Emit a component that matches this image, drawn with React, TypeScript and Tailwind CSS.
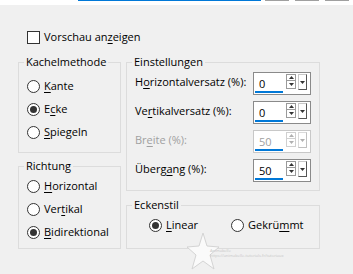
import React from "react";

const font = { fontFamily: '"Open Sans", "Noto Sans", sans-serif' };

function Label({
  text,
  hot,
  disabled,
}: {
  text: string;
  hot: number;
  disabled?: boolean;
}) {
  return (
    <span className={`whitespace-nowrap ${disabled ? "text-[#a0a0a0]" : "text-black"}`}>
      {text.slice(0, hot)}
      <span className="underline underline-offset-2">{text[hot]}</span>
      {text.slice(hot + 1)}
    </span>
  );
}

function Radio({ checked }: { checked?: boolean }) {
  return (
    <span className="w-[13px] h-[13px] shrink-0 rounded-full border border-[#333] bg-white flex items-center justify-center">
      {checked && <span className="w-[7px] h-[7px] rounded-full bg-[#333]" />}
    </span>
  );
}

function RadioRow({
  text,
  hot,
  checked,
}: {
  text: string;
  hot: number;
  checked?: boolean;
}) {
  return (
    <div className="flex items-center gap-[4px] h-[16px]">
      <Radio checked={checked} />
      <Label text={text} hot={hot} />
    </div>
  );
}

function Tri({ up, color }: { up?: boolean; color: string }) {
  return (
    <svg width="5" height="3" viewBox="0 0 5 3">
      <polygon points={up ? "0,3 5,3 2.5,0" : "0,0 5,0 2.5,3"} fill={color} />
    </svg>
  );
}

function SpinBox({ value, disabled }: { value: string; disabled?: boolean }) {
  const c = disabled ? "#b0b0b0" : "#333";
  return (
    <div
      className={`w-[58px] h-[23px] border bg-white flex items-start ${
        disabled ? "border-[#c8c8c8]" : "border-[#8a8a8a]"
      }`}
    >
      <div
        className={`ml-[1px] mt-[1px] w-[28px] h-[19px] border-b-2 border-[#0078d7] pl-[4px] leading-[19px] ${
          disabled ? "text-[#a0a0a0]" : "text-black"
        }`}
      >
        {value}
      </div>
      <div className="ml-[3px] mt-[1px] w-[10px] h-[15px] flex flex-col">
        <div
          className={`h-[7px] border flex items-center justify-center ${
            disabled ? "border-[#d0d0d0]" : "border-[#9a9a9a]"
          }`}
        >
          <Tri up color={c} />
        </div>
        <div
          className={`h-[8px] border border-t-0 flex items-center justify-center ${
            disabled ? "border-[#d0d0d0]" : "border-[#9a9a9a]"
          }`}
        >
          <Tri color={c} />
        </div>
      </div>
      <div
        className={`ml-[2px] mt-[1px] w-[9px] h-[16px] border flex items-center justify-center ${
          disabled
            ? "border-[#dadada] border-r-[#c0c0c0] border-b-[#c0c0c0]"
            : "border-[#c8c8c8] border-r-[#555] border-b-[#555]"
        }`}
      >
        <Tri color={c} />
      </div>
    </div>
  );
}

function SettingRow({
  text,
  hot,
  value,
  disabled,
}: {
  text: string;
  hot: number;
  value: string;
  disabled?: boolean;
}) {
  return (
    <div className="flex items-center justify-between h-[23px]">
      <span className="-mt-[3px]">
        <Label text={text} hot={hot} disabled={disabled} />
      </span>
      <SpinBox value={value} disabled={disabled} />
    </div>
  );
}

function Group({
  title,
  className,
  children,
}: {
  title: string;
  className: string;
  children: React.ReactNode;
}) {
  return (
    <fieldset className={`border border-[#dcdcdc] pl-[5px] ${className}`}>
      <legend className="px-[2px] leading-[16px]">{title}</legend>
      {children}
    </fieldset>
  );
}

export default function App() {
  return (
    <div
      className="w-[353px] h-[274px] bg-[#f0f0f0] text-[11px] text-black relative overflow-hidden"
      style={font}
    >
      <div className="h-[5px] bg-white flex items-start">
        <div className="ml-[78px] w-[183px] h-[1px] bg-[#0078d7]" />
        <div className="ml-[4px] w-[24px] h-[1px] bg-[#a0a0a0]" />
        <div className="ml-[6px] w-[24px] h-[1px] bg-[#a0a0a0]" />
        <div className="ml-[6px] w-[24px] h-[1px] bg-[#a0a0a0]" />
      </div>

      <div className="mt-[24px] ml-[27px] h-[16px] flex items-center gap-[4px]">
        <span className="w-[13px] h-[13px] border border-[#333] bg-white" />
        <Label text="Vorschau anzeigen" hot={11} />
      </div>

      <div className="mt-[9px] ml-[18px] grid grid-cols-[103px_194px] gap-x-[5px]">
        <div className="flex flex-col gap-[5px]">
          <Group title="Kachelmethode" className="h-[99px]">
            <div className="pl-[3px] pt-[8px] flex flex-col gap-[7px]">
              <RadioRow text="Kante" hot={0} />
              <RadioRow text="Ecke" hot={1} checked />
              <RadioRow text="Spiegeln" hot={0} />
            </div>
          </Group>
          <Group title="Richtung" className="h-[91px]">
            <div className="pl-[3px] pt-[4px] flex flex-col gap-[7px]">
              <RadioRow text="Horizontal" hot={0} />
              <RadioRow text="Vertikal" hot={3} />
              <RadioRow text="Bidirektional" hot={0} checked />
            </div>
          </Group>
        </div>

        <div className="flex flex-col gap-[6px]">
          <Group title="Einstellungen" className="h-[137px]">
            <div className="pl-[3px] pr-[8px] pt-[2px] flex flex-col gap-[6px]">
              <SettingRow text="Horizontalversatz (%):" hot={1} value="0" />
              <SettingRow text="Vertikalversatz (%):" hot={2} value="0" />
              <SettingRow text="Breite (%):" hot={2} value="50" disabled />
              <SettingRow text="Übergang (%):" hot={5} value="50" />
            </div>
          </Group>
          <Group title="Eckenstil" className="h-[52px]">
            <div className="pl-[17px] pt-[4px] flex items-center">
              <div className="w-[82px]">
                <RadioRow text="Linear" hot={0} checked />
              </div>
              <RadioRow text="Gekrümmt" hot={5} />
            </div>
          </Group>
        </div>
      </div>

      <div className="absolute left-[186px] top-[232px] flex items-center pointer-events-none">
        <svg width="34" height="38" viewBox="0 0 34 38">
          <polygon
            points="17,1 21,14 33,15 24,23 28,37 17,29 6,37 10,23 1,15 13,14"
            fill="#fafafa"
            stroke="#d4d4d4"
            strokeWidth="1"
          />
        </svg>
        <div className="flex flex-col -ml-[10px] mt-[4px] leading-[5px] text-[4px] text-[#c8c8c8]">
          <span>Animabelle</span>
          <span>https://animabelle-tutorials.fr/tutoriaux</span>
        </div>
      </div>
    </div>
  );
}
